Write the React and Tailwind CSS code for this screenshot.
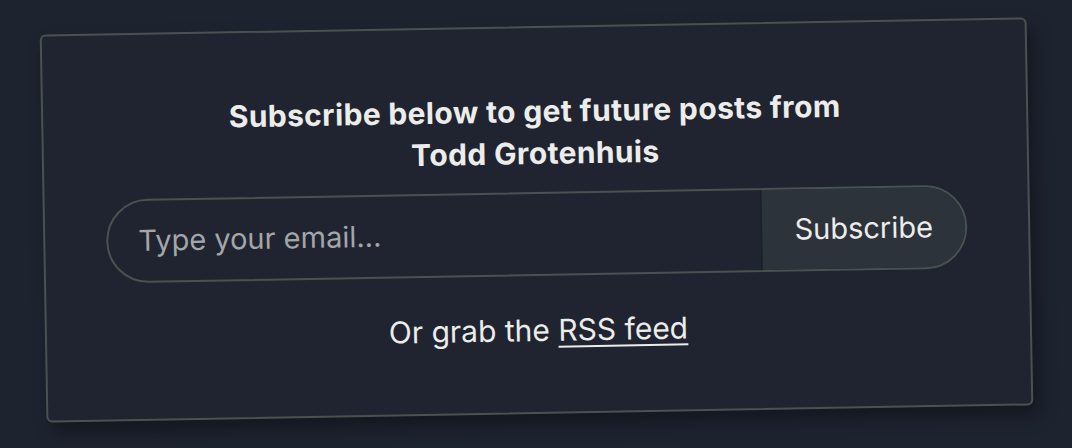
import React from 'react';

function SubscribeCard() {
  return (
    <div className="w-[987px] h-[388px] -rotate-1 rounded-md border-2 border-[#4a5251] bg-[#1f2430] px-[61px] pt-[62px] shadow-[6px_10px_18px_rgba(0,0,0,0.35)]">
      {/* Heading */}
      <h2 className="text-center text-[30px] font-bold leading-[42px] tracking-[0.012em] text-[#ececea]">
        Subscribe below to get future posts from
        <br />
        Todd Grotenhuis
      </h2>

      {/* Email form */}
      <form className="mt-[18px] flex h-[84px] overflow-hidden rounded-full border-2 border-[#4a5251]">
        <input
          type="email"
          placeholder="Type your email..."
          className="flex-1 bg-transparent pl-[30px] text-[29px] text-[#ececea] placeholder:text-[#a3a6a8] outline-none"
        />
        <button
          type="button"
          className="w-[205px] border-l-2 border-[#1b2029] bg-[#2d333b] text-[29px] text-[#ececea]"
        >
          Subscribe
        </button>
      </form>

      {/* RSS */}
      <p className="mt-[33px] text-center text-[30px] leading-[42px] text-[#ececea]">
        Or grab the <a href="#" className="underline underline-offset-[5px] decoration-2">RSS feed</a>
      </p>
    </div>
  );
}

export default function App() {
  return (
    <div className="flex h-[448px] w-full justify-center bg-[#1e2330] pt-[26px] font-['Inter',sans-serif]">
      <SubscribeCard />
    </div>
  );
}
